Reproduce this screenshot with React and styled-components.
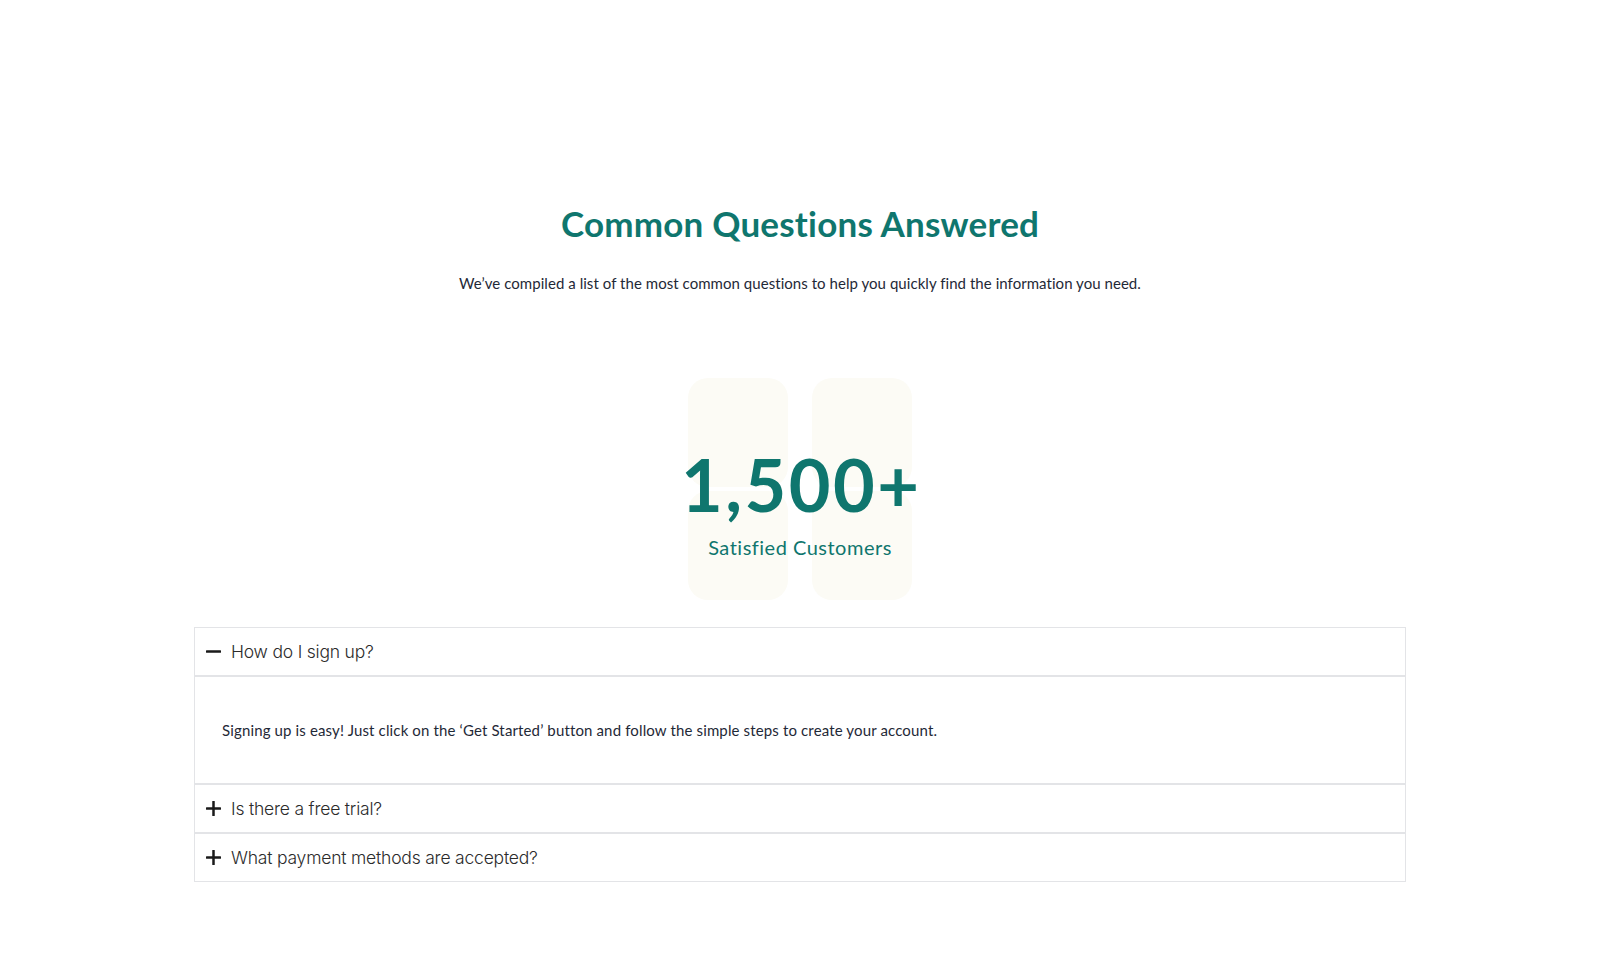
import React, { useState } from "react";
import styled, { createGlobalStyle } from "styled-components";

const GlobalStyle = createGlobalStyle`
  * { box-sizing: border-box; }
  body {
    margin: 0;
    background: #ffffff;
    font-family: "Lato", "Noto Sans", sans-serif;
  }
`;

const Section = styled.section`
  display: flex;
  flex-direction: column;
  align-items: center;
  padding: 203px 0 96px;
`;

const Title = styled.h2`
  margin: 0;
  font-family: "Lato", sans-serif;
  font-weight: 700;
  font-size: 35px;
  line-height: 40px;
  color: #0f766e;
  letter-spacing: 0.2px;
`;

const Subtitle = styled.p`
  margin: 28px 0 0;
  font-family: "Lato", sans-serif;
  font-size: 15px;
  line-height: 24px;
  letter-spacing: 0.05px;
  color: #1f2937;
`;

const Stat = styled.div`
  display: grid;
  grid-template-columns: 224px;
  grid-template-rows: 222px;
  margin-top: 83px;
`;

const Tiles = styled.div`
  grid-area: 1 / 1;
  display: grid;
  grid-template-columns: 100px 100px;
  grid-template-rows: 1fr 1fr;
  column-gap: 24px;
  row-gap: 4px;
`;

const Tile = styled.div`
  background: #fcfbf5;
  border-radius: 20px;
`;

const StatText = styled.div`
  grid-area: 1 / 1;
  min-width: 0;
  display: flex;
  flex-direction: column;
  align-items: center;
  padding-top: 68px;
  z-index: 1;
`;

const Number = styled.div`
  flex-shrink: 0;
  font-family: "Lato", sans-serif;
  font-weight: 700;
  font-size: 72px;
  line-height: 76px;
  letter-spacing: 2.5px;
  padding-left: 2.5px;
  color: #0f766e;
  white-space: nowrap;
`;

const Label = styled.div`
  margin-top: 12px;
  font-family: "Lato", sans-serif;
  font-size: 20px;
  line-height: 26px;
  letter-spacing: 0.5px;
  color: #0f766e;
  white-space: nowrap;
`;

const Accordion = styled.div`
  margin-top: 27px;
  width: 1212px;
  display: flex;
  flex-direction: column;
`;

const Header = styled.button`
  display: flex;
  align-items: center;
  gap: 10px;
  height: 49px;
  padding: 0 11px;
  background: #ffffff;
  border: 1px solid #e3e4e7;
  cursor: pointer;
  text-align: left;
  font-family: "Inter", sans-serif;
  font-weight: 300;
  font-size: 17.5px;
  letter-spacing: -0.2px;
  color: #2b2b2b;
`;

const Panel = styled.div`
  border: 1px solid #e3e4e7;
  padding: 41px 27px;
  font-family: "Lato", sans-serif;
  font-size: 15px;
  line-height: 24px;
  letter-spacing: 0.14px;
  color: #1f2937;
`;

const Icon = ({ open }) => (
  <svg width="15" height="15" viewBox="0 0 15 15" aria-hidden="true">
    <rect x="0" y="6.25" width="15" height="2.5" rx="0.5" fill="#1a1a1a" />
    {!open && <rect x="6.25" y="0" width="2.5" height="15" rx="0.5" fill="#1a1a1a" />}
  </svg>
);

const items = [
  {
    q: "How do I sign up?",
    a: "Signing up is easy! Just click on the \u2018Get Started\u2019 button and follow the simple steps to create your account.",
  },
  { q: "Is there a free trial?", a: "Yes, we offer a free trial so you can explore all features before committing." },
  { q: "What payment methods are accepted?", a: "We accept all major credit cards, PayPal and bank transfers." },
];

export default function App() {
  const [open, setOpen] = useState(0);
  return (
    <>
      <GlobalStyle />
      <Section>
        <Title>Common Questions Answered</Title>
        <Subtitle>
          We’ve compiled a list of the most common questions to help you quickly find the information you need.
        </Subtitle>
        <Stat>
          <Tiles>
            <Tile />
            <Tile />
            <Tile />
            <Tile />
          </Tiles>
          <StatText>
            <Number>1,500+</Number>
            <Label>Satisfied Customers</Label>
          </StatText>
        </Stat>
        <Accordion>
          {items.map((it, i) => (
            <React.Fragment key={it.q}>
              <Header onClick={() => setOpen(open === i ? -1 : i)}>
                <Icon open={open === i} />
                {it.q}
              </Header>
              {open === i && <Panel>{it.a}</Panel>}
            </React.Fragment>
          ))}
        </Accordion>
      </Section>
    </>
  );
}
